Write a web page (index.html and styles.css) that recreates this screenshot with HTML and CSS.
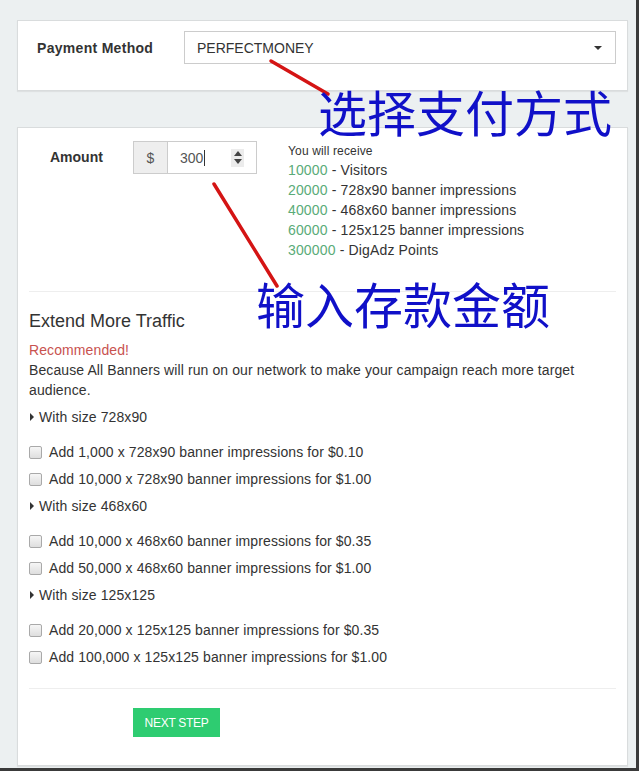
FILE: index.html
```html
<!DOCTYPE html>
<html>
<head>
  <title>Deposit</title>
  <link rel="stylesheet" href="styles.css">
</head>
<body>

  <div class="screen">

    <div class="panel panel-method">
      <div class="form-row">
        <label class="method-label">Payment Method</label>
        <div class="select">
          <span>PERFECTMONEY</span>
          <span class="caret"></span>
        </div>
      </div>
    </div>

    <div class="panel panel-amount">
      <div class="amount-row">
        <label class="amount-label">Amount</label>
        <div class="input-group">
          <span class="addon">$</span>
          <div class="amount-input">
            <span>300</span><span class="cursor"></span>
            <span class="spinner">
              <span class="spin-up"></span>
              <span class="spin-down"></span>
            </span>
          </div>
        </div>
        <div class="receive">
          <div class="receive-title">You will receive</div>
          <div><span class="num">10000</span> - Visitors</div>
          <div><span class="num">20000</span> - 728x90 banner impressions</div>
          <div><span class="num">40000</span> - 468x60 banner impressions</div>
          <div><span class="num">60000</span> - 125x125 banner impressions</div>
          <div><span class="num">300000</span> - DigAdz Points</div>
        </div>
      </div>

      <hr class="rule rule-top">

      <div class="extend">
        <h4>Extend More Traffic</h4>
        <p class="recommended">Recommended!</p>
        <p>Because All Banners will run on our network to make your campaign reach more target audience.</p>

        <div class="size-title"><span class="tri"></span>With size 728x90</div>
        <label class="check"><input type="checkbox"> Add 1,000 x 728x90 banner impressions for $0.10</label>
        <label class="check"><input type="checkbox"> Add 10,000 x 728x90 banner impressions for $1.00</label>

        <div class="size-title"><span class="tri"></span>With size 468x60</div>
        <label class="check"><input type="checkbox"> Add 10,000 x 468x60 banner impressions for $0.35</label>
        <label class="check"><input type="checkbox"> Add 50,000 x 468x60 banner impressions for $1.00</label>

        <div class="size-title"><span class="tri"></span>With size 125x125</div>
        <label class="check"><input type="checkbox"> Add 20,000 x 125x125 banner impressions for $0.35</label>
        <label class="check"><input type="checkbox"> Add 100,000 x 125x125 banner impressions for $1.00</label>
      </div>

      <hr class="rule rule-bottom">

      <button class="next-btn">NEXT STEP</button>
    </div>

    <!-- hand drawn notes on top of the screenshot -->
    <svg class="marks" width="639" height="771">
      <line x1="271" y1="61" x2="328" y2="94" />
      <line x1="214" y1="184" x2="277" y2="286" />
    </svg>
    <div class="note note-method">选择支付方式</div>
    <div class="note note-amount">输入存款金额</div>

  </div>

</body>
</html>
```

FILE: styles.css
```css
body {
  margin: 0;
  background: #fff;
  font-family: "Liberation Sans", Arial, sans-serif;
  color: #333;
}

.screen {
  position: relative;
  width: 639px;
  height: 771px;
  box-sizing: border-box;
  padding: 20px 8px 0 17px;
  background: #ecf0f1;
  border-right: 3px solid #3a3a3a;
  border-bottom: 3px solid #3a3a3a;
}

.panel {
  background: #fff;
  border: 1px solid #d9dcdd;
  box-shadow: 0 1px 1px rgba(0, 0, 0, 0.06);
}

/* payment method */
.panel-method {
  padding: 10px 11px 26px 19px;
}

.form-row {
  display: flex;
  align-items: center;
}

.method-label {
  width: 147px;
  font-size: 14px;
  font-weight: bold;
  letter-spacing: 0.3px;
}

.select {
  flex: 1;
  height: 33px;
  box-sizing: border-box;
  border: 1px solid #ccc;
  padding: 0 13px 0 12px;
  display: flex;
  align-items: center;
  justify-content: space-between;
  font-size: 14px;
  color: #333;
}

.caret {
  width: 0;
  height: 0;
  border-top: 4px solid #333;
  border-left: 4px solid transparent;
  border-right: 4px solid transparent;
}

/* amount */
.panel-amount {
  margin-top: 36px;
  padding: 13px 11px 28px 11px;
}

.amount-row {
  display: flex;
  align-items: flex-start;
  padding-left: 21px;
}

.amount-label {
  width: 83px;
  line-height: 32px;
  font-size: 14px;
  font-weight: bold;
}

.input-group {
  display: flex;
  width: 124px;
  height: 33px;
  box-sizing: border-box;
  border: 1px solid #ccc;
}

.addon {
  width: 33px;
  background: #eee;
  border-right: 1px solid #ccc;
  color: #555;
  font-size: 14px;
  display: flex;
  align-items: center;
  justify-content: center;
}

.amount-input {
  flex: 1;
  display: flex;
  align-items: center;
  padding-left: 12px;
  font-size: 14px;
  color: #555;
}

.cursor {
  width: 1px;
  height: 16px;
  background: #333;
  margin-left: 1px;
}

.spinner {
  margin-left: auto;
  margin-right: 12px;
  width: 13px;
  height: 18px;
  background: #ececec;
  display: flex;
  flex-direction: column;
  align-items: center;
  justify-content: center;
  gap: 3px;
}

.spin-up {
  border-bottom: 5px solid #444;
  border-left: 4px solid transparent;
  border-right: 4px solid transparent;
}

.spin-down {
  border-top: 5px solid #444;
  border-left: 4px solid transparent;
  border-right: 4px solid transparent;
}

.receive {
  margin-left: 31px;
  padding-top: 2px;
  font-size: 14px;
  line-height: 20px;
  letter-spacing: 0.15px;
}

.receive-title {
  font-size: 12px;
  line-height: 17px;
}

.num {
  color: #5aab78;
}

.rule {
  border: none;
  border-top: 1px solid #eee;
  margin: 0;
}

.rule-top {
  margin-top: 31px;
}

.rule-bottom {
  margin-top: 21px;
}

/* extend traffic */
.extend {
  font-size: 14px;
  line-height: 20px;
  letter-spacing: 0.1px;
}

.extend h4 {
  margin: 19px 0 9px;
  font-size: 18px;
  font-weight: normal;
  line-height: 20px;
  letter-spacing: 0;
}

.extend p {
  margin: 0;
}

.recommended {
  color: #c8524f;
}

.size-title {
  margin: 7px 0 15px;
  display: flex;
  align-items: center;
}

.tri {
  width: 0;
  height: 0;
  margin: 0 5px 0 1px;
  border-left: 4px solid #333;
  border-top: 4px solid transparent;
  border-bottom: 4px solid transparent;
}

.check {
  display: flex;
  align-items: center;
  height: 20px;
  margin-bottom: 7px;
}

.check input {
  appearance: none;
  width: 13px;
  height: 13px;
  margin: 0 7px 0 0;
  border: 1px solid #a9a9a9;
  border-radius: 2px;
  background: linear-gradient(#f6f6f6, #dedede);
}

.next-btn {
  margin: 19px 0 0 104px;
  width: 87px;
  height: 29px;
  border: none;
  background: #2ecc71;
  color: #fff;
  font-family: "Liberation Sans", Arial, sans-serif;
  font-size: 12px;
  letter-spacing: -0.3px;
  cursor: pointer;
}

/* annotations */
.marks {
  position: absolute;
  left: 0;
  top: 0;
}

.marks line {
  stroke: #d41414;
  stroke-width: 3.5;
  stroke-linecap: round;
}

.note {
  position: absolute;
  font-family: "Noto Sans CJK SC", sans-serif;
  font-size: 49px;
  line-height: 44px;
  height: 44px;
  color: #1010c8;
  white-space: nowrap;
}

.note-method {
  left: 318px;
  top: 89px;
}

.note-amount {
  left: 256px;
  top: 281px;
}
```
